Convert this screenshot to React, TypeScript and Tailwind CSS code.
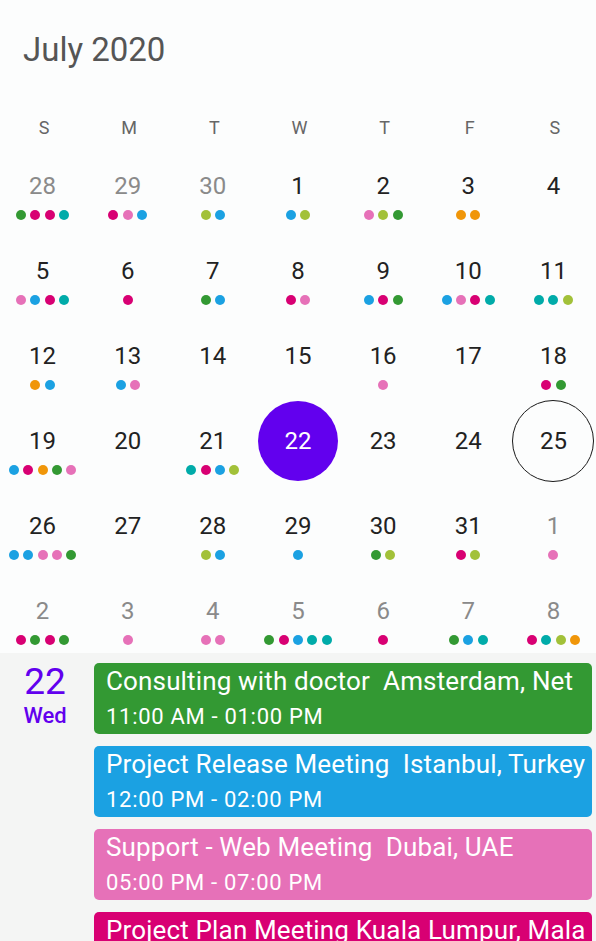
import React from "react";

const C = {
  green: "#339933",
  magenta: "#D80073",
  pink: "#E671B8",
  blue: "#1BA1E2",
  teal: "#00ABA9",
  lime: "#A2C139",
  orange: "#F09609",
};

type Day = { n: number; out?: boolean; dots: string[] };

const g = C.green, m = C.magenta, p = C.pink, b = C.blue, t = C.teal, l = C.lime, o = C.orange;

const weeks: Day[][] = [
  [
    { n: 28, out: true, dots: [g, m, m, t] },
    { n: 29, out: true, dots: [m, p, b] },
    { n: 30, out: true, dots: [l, b] },
    { n: 1, dots: [b, l] },
    { n: 2, dots: [p, l, g] },
    { n: 3, dots: [o, o] },
    { n: 4, dots: [] },
  ],
  [
    { n: 5, dots: [p, b, m, t] },
    { n: 6, dots: [m] },
    { n: 7, dots: [g, b] },
    { n: 8, dots: [m, p] },
    { n: 9, dots: [b, m, g] },
    { n: 10, dots: [b, p, m, t] },
    { n: 11, dots: [t, t, l] },
  ],
  [
    { n: 12, dots: [o, b] },
    { n: 13, dots: [b, p] },
    { n: 14, dots: [] },
    { n: 15, dots: [] },
    { n: 16, dots: [p] },
    { n: 17, dots: [] },
    { n: 18, dots: [m, g] },
  ],
  [
    { n: 19, dots: [b, m, o, g, p] },
    { n: 20, dots: [] },
    { n: 21, dots: [t, m, b, l] },
    { n: 22, dots: [] },
    { n: 23, dots: [] },
    { n: 24, dots: [] },
    { n: 25, dots: [] },
  ],
  [
    { n: 26, dots: [b, b, p, p, g] },
    { n: 27, dots: [] },
    { n: 28, dots: [l, b] },
    { n: 29, dots: [b] },
    { n: 30, dots: [g, l] },
    { n: 31, dots: [m, l] },
    { n: 1, out: true, dots: [p] },
  ],
  [
    { n: 2, out: true, dots: [m, g, m, g] },
    { n: 3, out: true, dots: [p] },
    { n: 4, out: true, dots: [p, p] },
    { n: 5, out: true, dots: [g, m, b, t, t] },
    { n: 6, out: true, dots: [m] },
    { n: 7, out: true, dots: [g, b, t] },
    { n: 8, out: true, dots: [m, t, l, o] },
  ],
];

const events = [
  { title: "Consulting with doctor  Amsterdam, Net", time: "11:00 AM - 01:00 PM", color: C.green },
  { title: "Project Release Meeting  Istanbul, Turkey", time: "12:00 PM - 02:00 PM", color: C.blue },
  { title: "Support - Web Meeting  Dubai, UAE", time: "05:00 PM - 07:00 PM", color: C.pink },
  { title: "Project Plan Meeting Kuala Lumpur, Mala", time: "09:00 PM - 10:00 PM", color: C.magenta },
];

function DayCell({ day, selected, today }: { day: Day; selected: boolean; today: boolean }) {
  return (
    <div className="flex h-[85px] flex-col items-center">
      <div className="mt-[1.5px] flex h-[82px] w-[82px] items-center justify-center">
        <div
          className={
            "flex items-center justify-center rounded-full " +
            (selected ? "h-[80px] w-[80px] bg-[#6200EE]" : "") +
            (today ? "h-[82px] w-[82px] border-[1.5px] border-[#1a1a1a]" : "")
          }
        >
          <span
            className={
              "text-[24px] leading-[30px] " +
              (selected ? "text-white" : day.out ? "text-[#8a8a8a]" : "text-[#222222]")
            }
          >
            {day.n}
          </span>
        </div>
      </div>
      <div className="-mt-[17px] flex gap-[4.4px]">
        {day.dots.map((c, i) => (
          <div key={i} className="h-[10px] w-[10px] rounded-full" style={{ backgroundColor: c }} />
        ))}
      </div>
    </div>
  );
}

export default function App() {
  return (
    <div className="h-[941px] w-[596px] overflow-hidden bg-[#fcfdfd] font-['Roboto',sans-serif]">
      {/* Month header */}
      <div className="h-[103px] pl-[23px] pt-[30px]">
        <span className="text-[33px] leading-[40px] text-[#555555]">July 2020</span>
      </div>

      {/* Weekdays */}
      <div className="grid h-[40px] grid-cols-7 pt-[15px]">
        {["S", "M", "T", "W", "T", "F", "S"].map((d, i) => (
          <div key={i} className="pl-[3px] text-center text-[18px] leading-[20px] text-[#666666]">
            {d}
          </div>
        ))}
      </div>

      {/* Month grid */}
      <div className="grid grid-cols-7">
        {weeks.flat().map((day, i) => (
          <DayCell key={i} day={day} selected={i === 24} today={i === 27} />
        ))}
      </div>

      {/* Agenda */}
      <div className="flex h-full bg-[#f4f5f4] pt-[2px]">
        <div className="flex w-[90px] shrink-0 flex-col items-center pt-[7px] text-[#6200EE]">
          <span className="text-[37px] leading-[40px]">22</span>
          <span className="mt-[2px] text-[22px] font-medium leading-[24px]">Wed</span>
        </div>
        <div className="flex min-w-0 flex-1 flex-col gap-[12px] pl-[4px] pr-[4px] pt-[8px]">
          {events.map((e, i) => (
            <div
              key={i}
              className="h-[71px] shrink-0 overflow-hidden rounded-[5px] pl-[12px] pt-[3px] text-white"
              style={{ backgroundColor: e.color }}
            >
              <div className="overflow-hidden whitespace-pre text-[26px] leading-[30px] tracking-[0.15px]">
                {e.title}
              </div>
              <div className="mt-[8px] whitespace-pre text-[22px] leading-[26px] tracking-[0.7px]">
                {e.time}
              </div>
            </div>
          ))}
        </div>
      </div>
    </div>
  );
}
